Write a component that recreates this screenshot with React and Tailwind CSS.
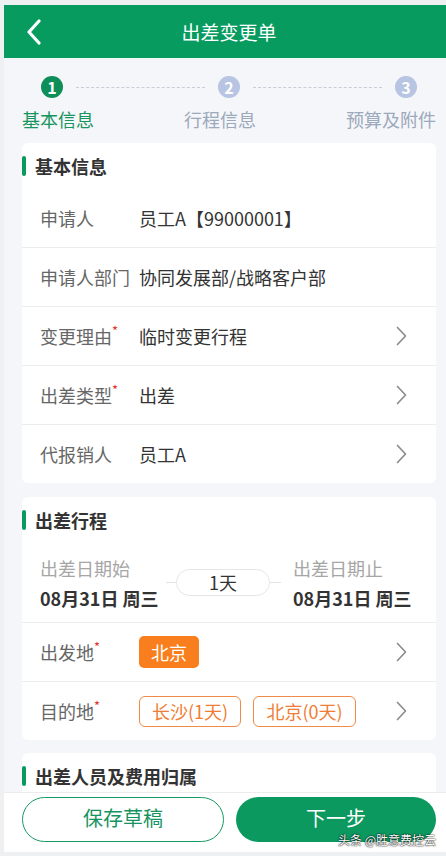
import React from 'react';

const Chevron = () => (
    <svg width="11" height="20" viewBox="0 0 11 20" fill="none">
        <path d="M1.5 1.5 L9.5 10 L1.5 18.5" stroke="#8d8d8d" strokeWidth="1.7" strokeLinecap="round" strokeLinejoin="round" />
    </svg>
);

const SectionTitle = ({ children }) => (
    <div className="h-[46px] flex items-center">
        <div className="w-[4px] h-[20px] rounded-full bg-[#0b9a5e]" />
        <div className="ml-[9px] text-[18px] leading-[24px] font-bold text-[#333]">{children}</div>
    </div>
);

const Row = ({ label, required, children, arrow, last }) => (
    <div className={`flex items-center pl-[18px] pr-[29px] ${last ? 'h-[58px]' : 'h-[59px] border-b border-[#ededed]'}`}>
        <div className="w-[99px] shrink-0 text-[18px] leading-[24px] text-[#666] flex">
            <span>{label}</span>
            {required && <span className="text-[#e5322d] text-[13px] leading-[14px]">*</span>}
        </div>
        <div className="flex-1 flex items-center gap-[12px] text-[18px] leading-[24px] text-[#333]">{children}</div>
        {arrow && <Chevron />}
    </div>
);

const Step = ({ n, active }) => (
    <div className={`w-[22px] h-[22px] rounded-full flex items-center justify-center text-white text-[16px] leading-[16px] font-bold ${active ? 'bg-[#0e8e58]' : 'bg-[#b7c4e2]'}`}>
        {n}
    </div>
);

const App = () => {
    return (
        <div className="w-[446px] h-[856px] overflow-hidden bg-[#eff0f2] pl-[4px] pt-[5px] pb-[4px] flex flex-col font-['Noto_Sans_CJK_SC','Noto_Sans',sans-serif]">
            <div className="h-[53px] shrink-0 bg-[#079b5f] grid grid-cols-[1fr_auto_1fr] items-center">
                <div className="pl-[22px] flex items-center">
                    <svg width="16" height="26" viewBox="0 0 16 26" fill="none">
                        <path d="M13 2 L3 13 L13 24" stroke="white" strokeWidth="3.2" strokeLinecap="round" strokeLinejoin="round" />
                    </svg>
                </div>
                <div className="pl-[8px] text-white text-[19px] leading-[26px]">出差变更单</div>
                <div />
            </div>

            <div className="flex-1 min-h-0 overflow-hidden bg-[#f5f6f9] flex flex-col">
                <div className="pt-[18px] pb-[9px] shrink-0">
                    <div className="flex items-center pl-[37px]">
                        <Step n="1" active />
                        <div className="mx-[13px] w-[129px] border-t border-dashed border-[#c6cdd9]" />
                        <Step n="2" />
                        <div className="mx-[13px] w-[129px] border-t border-dashed border-[#c6cdd9]" />
                        <Step n="3" />
                    </div>
                    <div className="mt-[9px] flex pl-[18px] gap-[90px] text-[18px] leading-[24px]">
                        <span className="text-[#16955f]">基本信息</span>
                        <span className="text-[#9ca8bb]">行程信息</span>
                        <span className="text-[#9ca8bb]">预算及附件</span>
                    </div>
                </div>

                <div className="ml-[18px] mr-[10px] mt-[3px] bg-white rounded-[6px] shrink-0">
                    <SectionTitle>基本信息</SectionTitle>
                    <Row label="申请人">员工A【99000001】</Row>
                    <Row label="申请人部门">协同发展部/战略客户部</Row>
                    <Row label="变更理由" required arrow>临时变更行程</Row>
                    <Row label="出差类型" required arrow>出差</Row>
                    <Row label="代报销人" arrow last>员工A</Row>
                </div>

                <div className="ml-[18px] mr-[10px] mt-[14px] bg-white rounded-[6px] shrink-0">
                    <SectionTitle>出差行程</SectionTitle>
                    <div className="h-[80px] flex items-center pl-[18px] border-b border-[#ededed]">
                        <div className="w-[126px] flex flex-col gap-[6px]">
                            <span className="text-[18px] leading-[24px] text-[#a6a6a6]">出差日期始</span>
                            <span className="text-[18px] leading-[24px] font-bold text-[#333] whitespace-nowrap">08月31日 周三</span>
                        </div>
                        <div className="w-[10px] border-t border-[#e3e3e3]" />
                        <div className="w-[94px] h-[27px] rounded-full border border-[#e6e6e6] flex items-center justify-center text-[18px] text-[#333]">1天</div>
                        <div className="w-[11px] border-t border-[#e3e3e3]" />
                        <div className="ml-[12px] flex flex-col gap-[6px]">
                            <span className="text-[18px] leading-[24px] text-[#a6a6a6]">出差日期止</span>
                            <span className="text-[18px] leading-[24px] font-bold text-[#333] whitespace-nowrap">08月31日 周三</span>
                        </div>
                    </div>
                    <Row label="出发地" required arrow>
                        <span className="h-[32px] px-[12px] rounded-[5px] bg-[#f97f1e] text-white flex items-center">北京</span>
                    </Row>
                    <Row label="目的地" required arrow last>
                        <span className="h-[31px] w-[102px] rounded-[6px] border border-[#ef8a47] text-[#ef7d33] flex items-center justify-center">长沙(1天)</span>
                        <span className="h-[31px] w-[103px] rounded-[6px] border border-[#ef8a47] text-[#ef7d33] flex items-center justify-center">北京(0天)</span>
                    </Row>
                </div>

                <div className="ml-[18px] mr-[10px] mt-[13px] bg-white rounded-[6px] shrink-0">
                    <SectionTitle>出差人员及费用归属</SectionTitle>
                    <div className="h-[40px]" />
                </div>
            </div>

            <div className="h-[60px] shrink-0 bg-white border-t border-[#ececec] pt-[4px] pl-[18px] pr-[10px] flex gap-[12px] relative">
                <button className="flex-1 h-[45px] rounded-full border border-[#169a62] text-[#17935f] text-[20px] leading-[26px] pb-[3px]">保存草稿</button>
                <button className="flex-1 h-[45px] rounded-full bg-[#0c9960] text-white text-[20px] leading-[26px] pb-[3px]">下一步</button>
                <span className="absolute right-[10px] top-[40px] text-white text-[12px] leading-[14px] [text-shadow:0_0_2px_#000,0_0_1px_#000]">头条 @胜意费控云</span>
            </div>
        </div>
    );
};

export default App;
